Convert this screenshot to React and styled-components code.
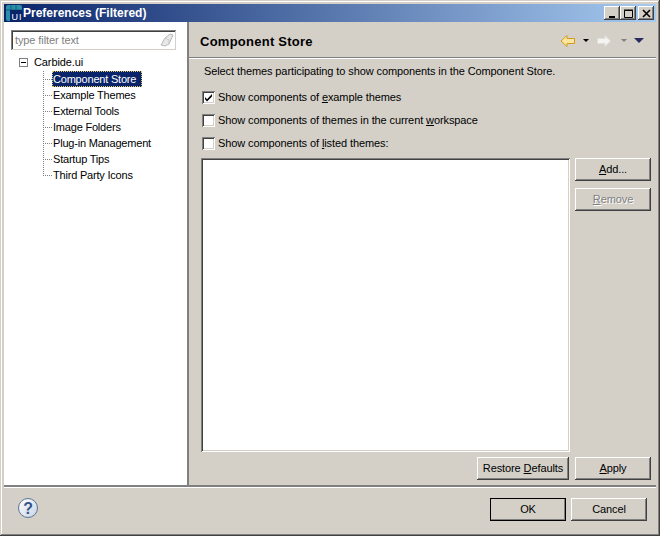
import styled, { createGlobalStyle } from 'styled-components';

const FONT = '"Liberation Sans", Arial, sans-serif';
const FACE = '#d4d0c8';

const raised = `
  background: ${FACE};
  box-shadow: inset -1px -1px 0 #404040, inset 1px 1px 0 #fff, inset -2px -2px 0 #808080;
`;

const GlobalStyle = createGlobalStyle`
  html, body {
    margin: 0;
    padding: 0;
    background: ${FACE};
  }
`;

const TREE_ITEMS = ['Component Store', 'Example Themes', 'External Tools', 'Image Folders', 'Plug-in Management', 'Startup Tips', 'Third Party Icons'];

const AppIcon = () => (
  <svg width="16" height="16" viewBox="0 0 16 16">
    <rect x="0" y="0" width="16" height="16" rx="2" fill="#2a8fa8" />
    <path d="M0 5h16M5 0v16M10 0v5" stroke="#0f5f7c" strokeWidth="1" />
    <rect x="4" y="5" width="12" height="11" fill="#0a246a" />
    <text x="5.5" y="14.5" fontSize="9" letterSpacing="1" fontFamily="Liberation Sans" fill="#fff">UI</text>
  </svg>
);

const EraserIcon = () => (
  <svg width="14" height="14" viewBox="0 0 14 14">
    <path d="M1 12 L5 5 L10 1 L13 2 L9 11 L5 13 Z" fill="#e8e8e8" stroke="#b8b8b8" />
    <path d="M5 5 L9 7 L9 11" fill="none" stroke="#c8c8c8" />
  </svg>
);

const BackArrow = () => (
  <svg width="16" height="14" viewBox="0 0 16 14">
    <path d="M1 7 L7 1.5 V4.5 H14.5 V9.5 H7 V12.5 Z" fill="#fbe6a0" stroke="#d49a1a" />
  </svg>
);

const ForwardArrow = () => (
  <svg width="16" height="14" viewBox="0 0 16 14">
    <path d="M14.5 7 L9 1.5 V4.5 H1.5 V9.5 H9 V12.5 Z" fill="#f4f3f0" stroke="#e0ded8" />
  </svg>
);

const HelpIcon = () => (
  <svg width="20" height="20" viewBox="0 0 20 20">
    <defs>
      <linearGradient id="helpFill" x1="0" y1="0" x2="1" y2="1">
        <stop offset="0" stopColor="#ffffff" />
        <stop offset="1" stopColor="#c9d3e3" />
      </linearGradient>
    </defs>
    <circle cx="10" cy="10" r="9.5" fill="url(#helpFill)" stroke="#5a7396" />
    <text x="10" y="15.5" textAnchor="middle" fontSize="16" fontWeight="700" fontFamily="Liberation Sans" fill="#35558a">?</text>
  </svg>
);

const App = () => (
  <>
    <GlobalStyle />
    <Window>
      <TitleBar>
        <AppIcon />
        <TitleText>Preferences (Filtered)</TitleText>
        <CaptionButtons>
          <CaptionButton>
            <svg width="9" height="9"><rect x="1" y="7" width="6" height="2" fill="#000" /></svg>
          </CaptionButton>
          <CaptionButton>
            <svg width="9" height="9"><path d="M0.5 1.5h8v7h-8zM0 1h9" fill="none" stroke="#000" /></svg>
          </CaptionButton>
          <CaptionButton $gap>
            <svg width="9" height="9"><path d="M1 1l7 7M8 1l-7 7" stroke="#000" strokeWidth="1.6" /></svg>
          </CaptionButton>
        </CaptionButtons>
      </TitleBar>
      <Main>
        <Sidebar>
          <FilterBox>
            <FilterPlaceholder>type filter text</FilterPlaceholder>
            <EraserIcon />
          </FilterBox>
          <TreeRoot>
            <Expander />
            <span>Carbide.ui</span>
          </TreeRoot>
          <TreeItems>
            {TREE_ITEMS.map((item, idx) => (
              <TreeRow key={item}>
                <Stem $last={idx === TREE_ITEMS.length - 1} />
                <TreeLabel $selected={idx === 0}>{item}</TreeLabel>
              </TreeRow>
            ))}
          </TreeItems>
        </Sidebar>
        <Content>
          <Header>
            <HeaderTitle>Component Store</HeaderTitle>
            <NavIcons>
              <BackArrow />
              <DropCaret $color="#000" />
              <ForwardArrow />
              <DropCaret $color="#808080" $wide />
              <MenuCaret />
            </NavIcons>
          </Header>
          <Description>Select themes participating to show components in the Component Store.</Description>
          <CheckRow $first>
            <CheckBox>
              <svg width="11" height="11" viewBox="0 0 11 11"><path d="M2 5l2 2.2L9 2v2.4L4 9.5 2 7.3z" fill="#000" /></svg>
            </CheckBox>
            <span>Show components of <u>e</u>xample themes</span>
          </CheckRow>
          <CheckRow>
            <CheckBox />
            <span>Show components of themes in the current <u>w</u>orkspace</span>
          </CheckRow>
          <CheckRow>
            <CheckBox />
            <span>Show components of <u>l</u>isted themes:</span>
          </CheckRow>
          <ListArea>
            <ThemeList />
            <SideButtons>
              <Button><u>A</u>dd...</Button>
              <Button $disabled><u>R</u>emove</Button>
            </SideButtons>
          </ListArea>
          <PageActions>
            <Button $width={92}>Restore <u>D</u>efaults</Button>
            <Button><u>A</u>pply</Button>
          </PageActions>
        </Content>
      </Main>
      <Footer>
        <HelpIcon />
        <FooterButtons>
          <Button $default>OK</Button>
          <Button>Cancel</Button>
        </FooterButtons>
      </Footer>
    </Window>
  </>
);

const Window = styled.div`
  box-sizing: border-box;
  width: 660px;
  height: 536px;
  padding: 4px;
  display: flex;
  flex-direction: column;
  background: ${FACE};
  box-shadow: inset -1px -1px 0 #404040, inset 1px 1px 0 #d4d0c8, inset -2px -2px 0 #808080, inset 2px 2px 0 #fff;
  font: 11px ${FONT};
  letter-spacing: -0.1px;
  color: #000;
  overflow: hidden;
`;

const TitleBar = styled.div`
  height: 18px;
  flex: none;
  display: flex;
  align-items: center;
  gap: 1px;
  padding-left: 2px;
  background: linear-gradient(to right, #0a246a, #a6caf0);
`;

const TitleText = styled.div`
  flex: 1;
  color: #fff;
  font-weight: 700;
  font-size: 12px;
  letter-spacing: 0;
`;

const CaptionButtons = styled.div`
  display: flex;
  padding-right: 2px;
`;

const CaptionButton = styled.div`
  ${raised}
  width: 16px;
  height: 14px;
  display: flex;
  align-items: center;
  justify-content: center;
  margin-left: ${p => (p.$gap ? '2px' : '0')};
`;

const Main = styled.div`
  height: 463px;
  flex: none;
  display: flex;
`;

const Sidebar = styled.div`
  box-sizing: border-box;
  width: 183px;
  flex: none;
  background: #fff;
  padding: 8px 7px 0;
`;

const FilterBox = styled.div`
  box-sizing: border-box;
  width: 165px;
  height: 20px;
  display: flex;
  align-items: center;
  justify-content: space-between;
  padding: 0 2px 0 4px;
  background: #fff;
  box-shadow: inset 1px 1px 0 #808080, inset -1px -1px 0 #d4d0c8, inset 2px 2px 0 #404040;
`;

const FilterPlaceholder = styled.span`
  color: #808080;
`;

const TreeRoot = styled.div`
  height: 16px;
  margin: 4px 0 0 8px;
  display: flex;
  align-items: center;
  gap: 6px;
`;

const Expander = styled.span`
  position: relative;
  box-sizing: border-box;
  width: 9px;
  height: 9px;
  border: 1px solid #808080;

  &::after {
    content: '';
    position: absolute;
    left: 1px;
    top: 3px;
    width: 5px;
    height: 1px;
    background: #000;
  }
`;

const TreeItems = styled.div`
  margin: 1px 0 0 32px;
  letter-spacing: -0.2px;
`;

const TreeRow = styled.div`
  height: 16px;
  display: flex;
  align-items: flex-start;
`;

const Stem = styled.span`
  box-sizing: border-box;
  width: 9px;
  height: ${p => (p.$last ? '9px' : '16px')};
  flex: none;
  background-image: repeating-linear-gradient(to bottom, #808080 0 1px, transparent 1px 2px),
    repeating-linear-gradient(to right, #808080 0 1px, transparent 1px 2px);
  background-size: 1px 100%, 100% 1px;
  background-position: 0 0, 0 8px;
  background-repeat: no-repeat;
`;

const TreeLabel = styled.span`
  box-sizing: border-box;
  height: 16px;
  line-height: 14px;
  padding: 0 5px 0 0;
  white-space: nowrap;
  border: 1px ${p => (p.$selected ? 'dotted #e8c860' : 'solid transparent')};
  background: ${p => (p.$selected ? '#0a246a' : 'transparent')};
  color: ${p => (p.$selected ? '#fff' : '#000')};
`;

const Content = styled.div`
  flex: 1;
  min-width: 0;
  display: flex;
  flex-direction: column;
  border-left: 2px solid #808080;
`;

const Header = styled.div`
  height: 33px;
  flex: none;
  display: flex;
  align-items: center;
  justify-content: space-between;
  padding: 2px 12px 0 11px;
  border-bottom: 1px solid #808080;
  box-shadow: 0 1px 0 #fff;
`;

const HeaderTitle = styled.div`
  font-size: 13px;
  font-weight: 700;
  letter-spacing: 0.25px;
  padding-top: 2px;
`;

const NavIcons = styled.div`
  display: flex;
  align-items: center;
`;

const DropCaret = styled.span`
  width: 0;
  height: 0;
  margin: 0 7px 0 ${p => (p.$wide ? '9px' : '7px')};
  border-style: solid;
  border-width: 3px 3px 0;
  border-color: ${p => p.$color} transparent transparent;
`;

const MenuCaret = styled.span`
  width: 0;
  height: 0;
  border-style: solid;
  border-width: 5px 5px 0;
  border-color: #2b2a5e transparent transparent;
`;

const Description = styled.div`
  margin: 6px 0 0 15px;
  height: 14px;
  line-height: 14px;
`;

const CheckRow = styled.div`
  height: 14px;
  margin: ${p => (p.$first ? '12px' : '8px')} 0 1px 13px;
  display: flex;
  align-items: center;
  gap: 3px;
  line-height: 14px;
`;

const CheckBox = styled.span`
  box-sizing: border-box;
  width: 13px;
  height: 13px;
  flex: none;
  background: #fff;
  display: flex;
  align-items: center;
  justify-content: center;
  box-shadow: inset 1px 1px 0 #808080, inset -1px -1px 0 #fff, inset 2px 2px 0 #404040, inset -2px -2px 0 #d4d0c8;
`;

const ListArea = styled.div`
  margin: 7px 0 0 12px;
  display: flex;
  gap: 5px;
`;

const ThemeList = styled.div`
  width: 369px;
  height: 294px;
  background: #fff;
  box-shadow: inset 1px 1px 0 #808080, inset -1px -1px 0 #fff, inset 2px 2px 0 #404040, inset -2px -2px 0 #d4d0c8;
`;

const SideButtons = styled.div`
  display: flex;
  flex-direction: column;
  gap: 7px;
`;

const Button = styled.div`
  box-sizing: border-box;
  width: ${p => p.$width || 76}px;
  height: 23px;
  padding-bottom: 2px;
  flex: none;
  display: flex;
  align-items: center;
  justify-content: center;
  white-space: pre;
  ${raised}
  color: ${p => (p.$disabled ? '#808080' : '#000')};
  text-shadow: ${p => (p.$disabled ? '1px 1px 0 #fff' : 'none')};
  outline: ${p => (p.$default ? '1px solid #000' : 'none')};
  outline-offset: -1px;
`;

const PageActions = styled.div`
  margin: 5px 5px 0 0;
  display: flex;
  justify-content: flex-end;
  gap: 6px;
`;

const Footer = styled.div`
  flex: 1;
  display: flex;
  justify-content: space-between;
  align-items: flex-start;
  padding: 11px 9px 0 14px;
  border-top: 2px solid #808080;
  box-shadow: inset 0 1px 0 #fff;
`;

const FooterButtons = styled.div`
  display: flex;
  gap: 5px;
`;

export default App;
